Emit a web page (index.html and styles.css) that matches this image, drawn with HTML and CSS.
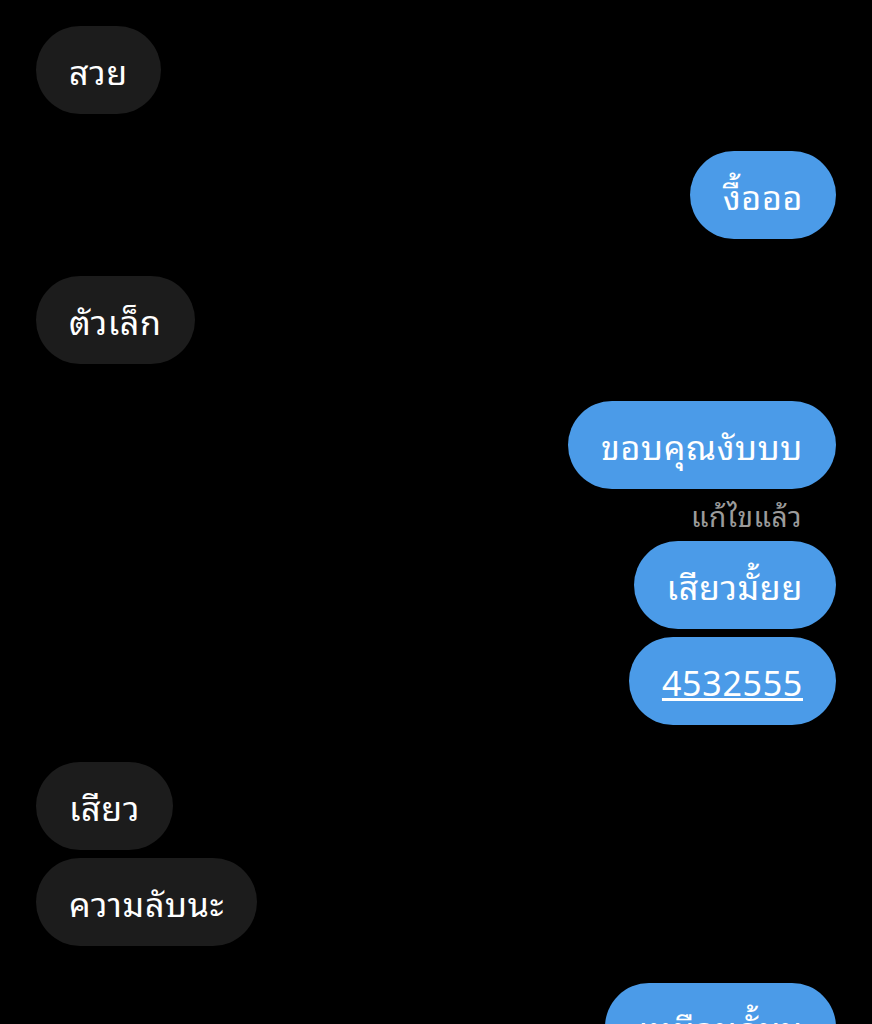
FILE: index.html
```html
<!DOCTYPE html>
<html lang="th">
<head>
  <meta charset="UTF-8" />
  <meta name="viewport" content="width=device-width, initial-scale=1.0"/>
  <title>Chat</title>
  <link rel="stylesheet" href="styles.css">
</head>
<body>
  <div class="chat">
    <div class="group in">
      <div class="bubble">สวย</div>
    </div>
    <div class="group out">
      <div class="bubble">งื้อออ</div>
    </div>
    <div class="group in">
      <div class="bubble">ตัวเล็ก</div>
    </div>
    <div class="group out">
      <div class="bubble">ขอบคุณงับบบ</div>
      <div class="edited">แก้ไขแล้ว</div>
      <div class="bubble">เสียวมั้ยย</div>
      <div class="bubble"><a href="#">4532555</a></div>
    </div>
    <div class="group in">
      <div class="bubble">เสียว</div>
      <div class="bubble">ความลับนะ</div>
    </div>
    <div class="group out">
      <div class="bubble">เหมือนกั้นน</div>
    </div>
  </div>
</body>
</html>
```

FILE: styles.css
```css
body {
  margin: 0;
  background: #000;
  color: white;
  font-family: 'Noto Sans Thai Looped', 'Thonburi', 'Noto Sans Thai', 'Noto Sans', sans-serif;
  height: 100vh;
  overflow: hidden;
}
.chat {
  display: flex;
  flex-direction: column;
  gap: 37px;
  padding: 26px 36px;
}
.group {
  display: flex;
  flex-direction: column;
  gap: 8px;
}
.group.in {
  align-items: flex-start;
}
.group.out {
  align-items: flex-end;
}
.bubble {
  font-size: 34px;
  line-height: 44px;
  letter-spacing: 0.7px;
  padding: 22px 33px;
  border-radius: 44px;
  background: #1c1c1c;
}
.out .bubble {
  background: #4b9be8;
}
.bubble a {
  color: white;
}
.edited {
  font-size: 28px;
  line-height: 36px;
  letter-spacing: 0.6px;
  color: #9b9b9b;
  padding-right: 34px;
}
```
